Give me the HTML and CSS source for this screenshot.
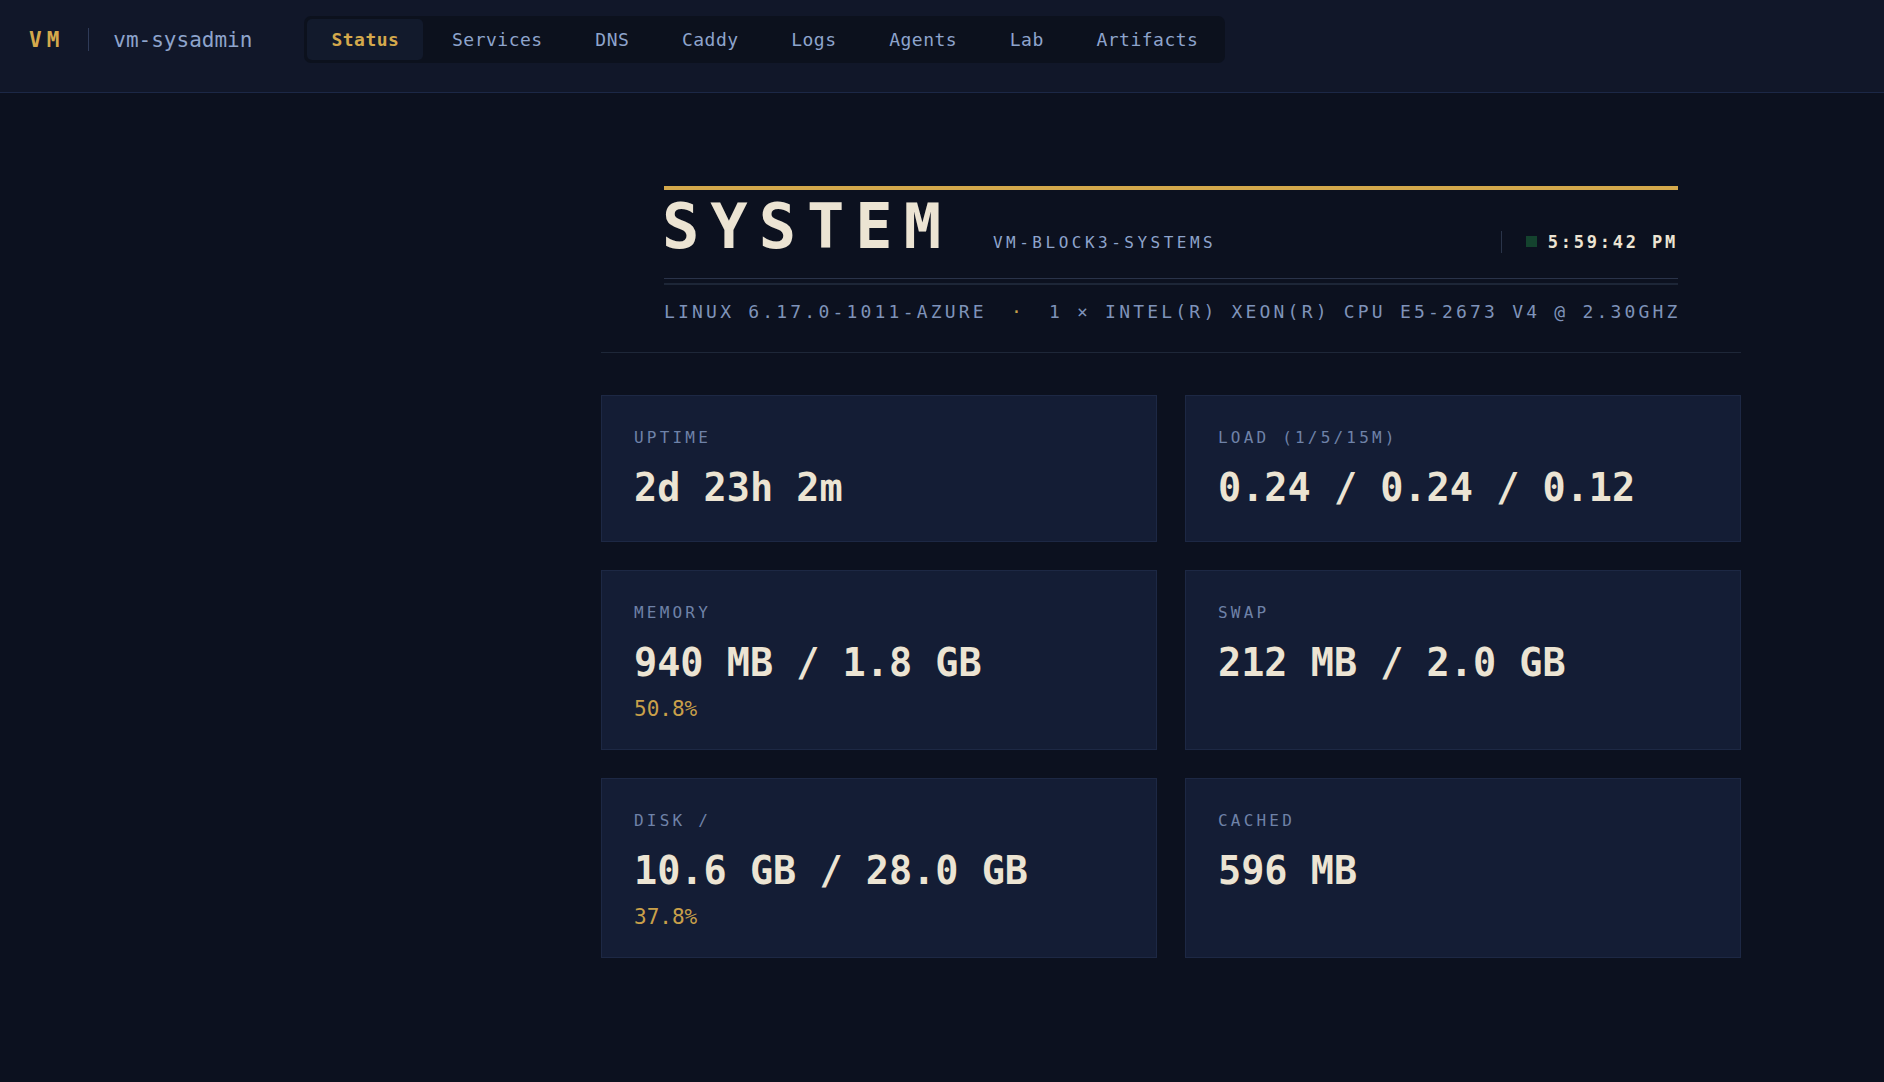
FILE: index.html
```html
<!DOCTYPE html>
<html lang="en">
<head>
<meta charset="UTF-8" />
<meta name="viewport" content="width=device-width, initial-scale=1" />
<title>vm-sysadmin · Status</title>
<link rel="stylesheet" href="styles.css">
</head>
<body>
  <header class="topbar">
    <div class="brand">
      <span class="brand-mark">VM</span>
      <span class="brand-sep"></span>
      <span class="brand-host">vm-sysadmin</span>
    </div>
    <nav class="tabs">
      <a class="tab active" href="#">Status</a>
      <a class="tab" href="#">Services</a>
      <a class="tab" href="#">DNS</a>
      <a class="tab" href="#">Caddy</a>
      <a class="tab" href="#">Logs</a>
      <a class="tab" href="#">Agents</a>
      <a class="tab" href="#">Lab</a>
      <a class="tab" href="#">Artifacts</a>
    </nav>
  </header>

  <main class="page">
    <div class="panel-top">
      <div class="panel-head">
        <div class="title-row">
          <h1>SYSTEM</h1>
          <span class="host">VM-BLOCK3-SYSTEMS</span>
          <div class="clock"><span class="live"></span>5:59:42 PM</div>
        </div>
        <div class="spec">LINUX 6.17.0-1011-AZURE <span class="sep">·</span> 1 × INTEL(R) XEON(R) CPU E5-2673 V4 @ 2.30GHZ</div>
      </div>
    </div>

    <div class="stats">
      <div class="card">
        <div class="label">UPTIME</div>
        <div class="value">2d 23h 2m</div>
      </div>
      <div class="card">
        <div class="label">LOAD (1/5/15M)</div>
        <div class="value">0.24 / 0.24 / 0.12</div>
      </div>
      <div class="card">
        <div class="label">MEMORY</div>
        <div class="value">940 MB / 1.8 GB</div>
        <div class="pct">50.8%</div>
      </div>
      <div class="card">
        <div class="label">SWAP</div>
        <div class="value">212 MB / 2.0 GB</div>
      </div>
      <div class="card">
        <div class="label">DISK /</div>
        <div class="value">10.6 GB / 28.0 GB</div>
        <div class="pct">37.8%</div>
      </div>
      <div class="card">
        <div class="label">CACHED</div>
        <div class="value">596 MB</div>
      </div>
    </div>
  </main>
</body>
</html>
```

FILE: styles.css
```css
/* Reset & base */
* {
  box-sizing: border-box;
}
body {
  margin: 0;
  min-height: 100vh;
  background: #0c111f;
  font-family: "DejaVu Sans Mono", "Liberation Mono", monospace;
  color: #ece4d3;
}

/* Top bar */
.topbar {
  display: flex;
  align-items: flex-start;
  height: 93px;
  padding: 16px 29px 0;
  background: #111729;
  border-bottom: 1px solid #1c2846;
}
.brand {
  display: flex;
  align-items: center;
  gap: 24px;
  height: 47px;
}
.brand-mark {
  color: #d4a94c;
  font-size: 21px;
  font-weight: 700;
  letter-spacing: 5px;
}
.brand-sep {
  width: 1px;
  height: 23px;
  background: #2f3b58;
}
.brand-host {
  color: #8ea4cc;
  font-size: 21px;
}
.tabs {
  display: flex;
  gap: 4.6px;
  margin-left: 52px;
  padding: 3px;
  background: #0c111d;
  border-radius: 7px;
}
.tab {
  padding: 0 24px;
  line-height: 41px;
  font-size: 18px;
  letter-spacing: 0.5px;
  color: #8ea4cc;
  text-decoration: none;
  border-radius: 5px;
}
.tab.active {
  background: #121a2c;
  color: #d4a94c;
  font-weight: 700;
}

/* Page */
.page {
  width: 1140px;
  margin: 0 143px 0 auto;
  padding-top: 93px;
}
.panel-top {
  padding-bottom: 28px;
  border-bottom: 1px solid #1e2738;
}
.panel-head {
  margin: 0 63px;
  border-top: 4px solid #d4a94c;
}
.title-row {
  display: flex;
  align-items: baseline;
  padding: 6px 0 20px;
  border-bottom: 1px solid #2a3349;
}
.title-row h1 {
  margin: 0 0 0 -2px;
  font-size: 62px;
  line-height: 1;
  font-weight: 700;
  letter-spacing: 11px;
  color: #ece4d3;
}
.host {
  margin-left: 41px;
  font-size: 16px;
  letter-spacing: 3.5px;
  color: #8ea4cc;
}
.clock {
  margin-left: auto;
  padding-left: 24px;
  border-left: 1px solid #2a3449;
  line-height: 22px;
  font-size: 17px;
  font-weight: 700;
  letter-spacing: 2.8px;
  color: #ece4d3;
  white-space: nowrap;
}
.live {
  display: inline-block;
  width: 11px;
  height: 11px;
  margin-right: 11px;
  background: #14432e;
  vertical-align: 1px;
}
.spec {
  margin-top: 4px;
  padding-top: 15px;
  border-top: 2px solid #1d2637;
  font-size: 18px;
  line-height: 24px;
  letter-spacing: 3.2px;
  color: #7f93b9;
  white-space: nowrap;
}
.sep {
  margin: 0 10px;
  color: #c8a04a;
}

/* Stat cards */
.stats {
  display: grid;
  grid-template-columns: 1fr 1fr;
  gap: 28px;
  margin-top: 42px;
}
.card {
  padding: 32px 32px 30px;
  background: #141d35;
  border: 1px solid #1d2844;
}
.label {
  font-size: 16px;
  line-height: 20px;
  letter-spacing: 3.2px;
  color: #6f82a8;
}
.value {
  margin-top: 16px;
  font-size: 38.5px;
  line-height: 47px;
  font-weight: 700;
  color: #ece4d3;
}
.pct {
  margin-top: 11px;
  margin-bottom: -3px;
  font-size: 21px;
  line-height: 25px;
  color: #c9a04a;
}
```
